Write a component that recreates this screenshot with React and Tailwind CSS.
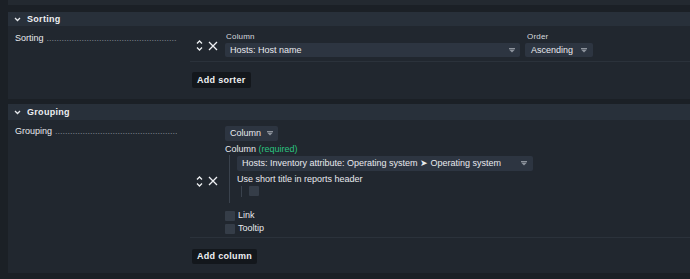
import React from "react";

const Arrow = () => (
  <svg width="6" height="5" viewBox="0 0 6 5" className="shrink-0">
    <rect x="0" y="0" width="6" height="1" fill="#8d939c" />
    <path d="M0 1.5 H6 L3 4.5 Z" fill="#8d939c" />
  </svg>
);

const Chevron = () => (
  <svg width="7" height="5" viewBox="0 0 7 5" className="shrink-0">
    <path d="M1 1 L3.5 3.5 L6 1" stroke="#e6e9ed" strokeWidth="1.3" fill="none" />
  </svg>
);

const UpDown = () => (
  <svg width="7" height="13" viewBox="0 0 7 13" className="shrink-0">
    <path d="M1 4.5 L3.5 2 L6 4.5" stroke="#eef0f3" strokeWidth="1.3" fill="none" />
    <path d="M1 8.5 L3.5 11 L6 8.5" stroke="#eef0f3" strokeWidth="1.3" fill="none" />
  </svg>
);

const Cross = () => (
  <svg width="10" height="10" viewBox="0 0 10 10" className="shrink-0">
    <path d="M1 1 L9 9 M9 1 L1 9" stroke="#eef0f3" strokeWidth="1.3" fill="none" />
  </svg>
);

const Dots = () => (
  <span className="flex-1 overflow-hidden whitespace-nowrap text-[#80868f] ml-[3px] mr-[13px]">
    {".".repeat(80)}
  </span>
);

const Header = ({ title, h }) => (
  <div className={`flex items-center bg-[#28303a] pl-[6px] ${h}`}>
    <Chevron />
    <span className="ml-[6px] font-bold tracking-[0.3px] text-[#eceef1]">{title}</span>
  </div>
);

const Checkbox = () => <div className="w-[10px] h-[10px] rounded-[1px] bg-[#353d48] shrink-0" />;

export default function App() {
  return (
    <div className="w-[690px] h-[279px] overflow-hidden bg-[#1b2026] font-['Liberation_Sans',Arial,sans-serif] text-[9px] leading-[11px] text-[#e8eaee] pl-[8px] flex flex-col">
      <div className="h-[5px] bg-[#232930] shrink-0" />
      <div className="h-[7px] shrink-0" />

      {/* Sorting card */}
      <div className="shrink-0">
        <Header title="Sorting" h="h-[14px]" />
        <div className="h-[73px] bg-[#21272f] flex">
          <div className="w-[182px] pl-[7px] pt-[7px] flex">
            <span>Sorting</span>
            <Dots />
          </div>
          <div className="flex-1 flex flex-col">
            <div className="flex items-center border-b border-[#2b323b] pt-[6px] pb-[4px]">
              <div className="w-[35px] flex items-center pl-[6px] mt-[2px]">
                <UpDown />
                <div className="ml-[5px]"><Cross /></div>
              </div>
              <div className="flex flex-col">
                <span className="text-[8px] leading-[10px] pl-[1px] tracking-[0.2px] text-[#d6dadf]">Column</span>
                <div className="mt-[1px] w-[295px] h-[14px] rounded-[2px] bg-[#2d3541] flex items-center justify-between pl-[5px] pr-[5px]">
                  <span>Hosts: Host name</span>
                  <Arrow />
                </div>
              </div>
              <div className="flex flex-col ml-[5px]">
                <span className="text-[8px] leading-[10px] pl-[2px] tracking-[0.2px] text-[#d6dadf]">Order</span>
                <div className="mt-[1px] w-[68px] h-[14px] rounded-[2px] bg-[#2d3541] flex items-center justify-between pl-[6px] pr-[6px]">
                  <span>Ascending</span>
                  <Arrow />
                </div>
              </div>
            </div>
            <div className="mt-[10px] ml-[2px]">
              <span className="inline-flex items-center h-[16px] px-[5px] rounded-[2px] bg-[#13171c] font-bold tracking-[0.3px] text-[#eef0f3]">
                Add sorter
              </span>
            </div>
          </div>
        </div>
      </div>

      <div className="h-[5px] shrink-0" />

      {/* Grouping card */}
      <div className="shrink-0">
        <Header title="Grouping" h="h-[16px]" />
        <div className="h-[153px] bg-[#21272f] flex">
          <div className="w-[182px] pl-[7px] pt-[6px] flex">
            <span>Grouping</span>
            <Dots />
          </div>
          <div className="flex-1 flex flex-col">
            <div className="flex items-center border-b border-[#2b323b] pt-[6px] pb-[3px]">
              <div className="w-[35px] flex items-center pl-[6px] mt-[2px]">
                <UpDown />
                <div className="ml-[5px]"><Cross /></div>
              </div>
              <div className="flex flex-col">
                <div className="w-[53px] h-[15px] rounded-[2px] bg-[#2d3541] flex items-center justify-between pl-[5px] pr-[5px]">
                  <span>Column</span>
                  <Arrow />
                </div>
                <div className="mt-[3px]">
                  Column <span className="text-[#2ac27f]">(required)</span>
                </div>
                <div className="ml-[4px] border-l border-[#3a424d] pl-[7px] pt-[1px] pb-[6px]">
                  <div className="w-[296px] h-[15px] rounded-[2px] bg-[#2d3541] flex items-center justify-between pl-[5px] pr-[6px]">
                    <span>Hosts: Inventory attribute: Operating system ➤ Operating system</span>
                    <Arrow />
                  </div>
                  <div className="mt-[3px]">Use short title in reports header</div>
                  <div className="ml-[4px] mt-[1px] border-l border-[#3a424d] pl-[7px] h-[11px]">
                    <Checkbox />
                  </div>
                </div>
                <div className="mt-[7px] flex items-center">
                  <Checkbox />
                  <span className="ml-[3px]">Link</span>
                </div>
                <div className="mt-[2px] flex items-center">
                  <Checkbox />
                  <span className="ml-[3px]">Tooltip</span>
                </div>
              </div>
            </div>
            <div className="mt-[11px] ml-[2px]">
              <span className="inline-flex items-center h-[15px] px-[5px] rounded-[2px] bg-[#13171c] font-bold tracking-[0.3px] text-[#eef0f3]">
                Add column
              </span>
            </div>
          </div>
        </div>
      </div>
    </div>
  );
}
